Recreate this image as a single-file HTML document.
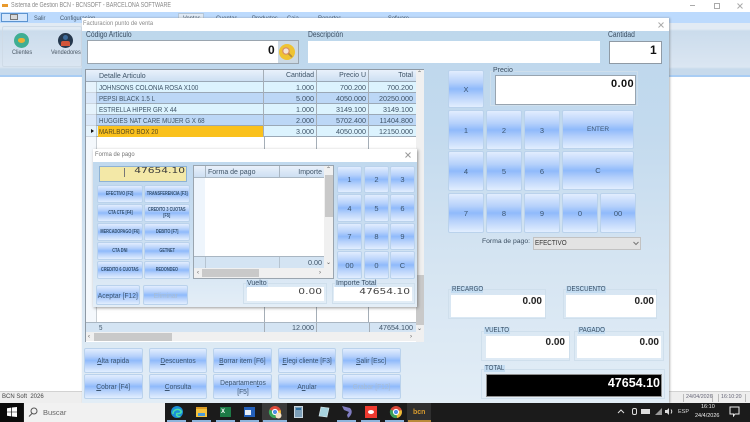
<!DOCTYPE html>
<html><head><meta charset="utf-8"><title>BCN</title>
<style>
*{box-sizing:border-box;margin:0;padding:0}
html,body{width:750px;height:422px;overflow:hidden;background:#fff}
body{font-family:"Liberation Sans",sans-serif;color:#33475a}
#p{position:absolute;left:0;top:0;width:750px;height:422px;overflow:hidden;filter:blur(.35px)}
#p div{position:absolute}
.t{white-space:nowrap;line-height:1}
.b{background:linear-gradient(#e2edfe 0%,#b6d1fb 32%,#8fbafb 50%,#b6d1fb 70%,#e2eefe 100%);border:1px solid #bad2ec;border-radius:2px;display:flex;align-items:center;justify-content:center;text-align:center;color:#3c5570;font-size:7.600px;line-height:9px;white-space:nowrap}
.b span{display:inline-block;transform:scaleX(.88)}
.bs{font-size:5.500px;line-height:6px;font-weight:bold;color:#34506e}
.b.bs span{transform:scaleX(.7)}
.n{font-size:7.500px}
.r{text-align:right;color:#222;font-weight:bold}
.l{background:#c3dcf1;color:#3a5066;font-size:7px;line-height:7px;height:7px;padding:0 0 0 1px;white-space:nowrap}
.l span{display:block;transform:scaleX(.88);transform-origin:0 0}
.ll{background:#c9def2;color:#3a5066;font-size:7px;line-height:8px;padding:0 1px;white-space:nowrap}
.g{border:1px solid #cfdfec}
.row{left:86px;width:330px;height:11px;font-size:7.200px;line-height:11px;color:#3f5468;border-bottom:1px solid #9aa8b6}
.row>.t{line-height:inherit;font-size:7.500px;transform:scaleX(.83);transform-origin:0 0}
.c{top:0;height:11px;text-align:right;white-space:nowrap;border-right:1px solid #a5aeb7;padding-right:2px}
.m{top:16px;font-size:6.500px;color:#44586c;transform:scaleX(.88);transform-origin:0 0}
.lb{font-size:8px;color:#3a4d60;top:31px;transform:scaleX(.84);transform-origin:0 0}
.d{font-family:'DejaVu Sans',sans-serif;font-size:8px;color:#444;text-align:right;transform:scaleX(1.33);transform-origin:100% 0}
.rib{font-size:6.500px;color:#4a5764;top:50px;transform:scaleX(.86);transform-origin:0 0}
</style></head><body><div id="p">

<!-- app title -->
<div style="left:0;top:0;width:750px;height:12px;background:#fff"></div>
<div style="left:2px;top:4px;width:6px;height:3px;background:#e99a2c"></div>
<div class="t" style="left:11px;top:2px;font-size:7px;color:#8a8a8a;transform:scaleX(.77);transform-origin:0 0">Sistema de Gestion BCN - BCNSOFT - BARCELONA SOFTWARE</div>
<svg style="position:absolute;left:688px;top:2px" width="58" height="8"><path d="M2 3.500H7" stroke="#aaa"/><rect x="26.500" y="1.500" width="5" height="5" fill="none" stroke="#aaa"/><path d="M49.500 1.500L54.500 6.500M54.500 1.500L49.500 6.500" stroke="#aaa"/></svg>

<!-- menu -->
<div style="left:0;top:12px;width:750px;height:11px;background:#bcdafd"></div>
<div style="left:1px;top:13px;width:27px;height:9px;background:#d4e6fb;border:1px solid #5c93cf"></div>
<div style="left:10px;top:14px;width:8px;height:6px;background:#d8d8d8;border:1px solid #777"></div>
<div class="t m" style="left:34px">Salir</div>
<div class="t m" style="left:60px">Configuracion</div>
<div style="left:178px;top:13px;width:26px;height:10px;background:#dfe9f4;border:1px solid #b4c6d8;border-bottom:0"></div>
<div class="t m" style="left:183px">Ventas</div>
<div class="t m" style="left:216px">Cuentas</div>
<div class="t m" style="left:252px">Productos</div>
<div class="t m" style="left:287px">Caja</div>
<div class="t m" style="left:318px">Reportes</div>
<div class="t m" style="left:388px">Sofware</div>

<!-- ribbon -->
<div style="left:0;top:23px;width:750px;height:54px;background:linear-gradient(#e2ebf4 0,#e2ebf4 6px,#cbdcec 8px,#dbe6f2 44px,#c7daec 46px,#c7daec 100%);border-bottom:2px solid #a9cdf4"></div>
<div style="left:2px;top:26px;width:80px;height:41px;border:1px solid #cfdbe7;border-radius:2px"></div>
<div style="left:14px;top:33px;width:15px;height:15px;border-radius:50%;background:#3fae93"></div>
<div style="left:18px;top:38px;width:7px;height:5px;border-radius:50% 50% 60% 60%;background:#ecaf34"></div>
<div class="t rib" style="left:12px">Clientes</div>
<div style="left:58px;top:33px;width:15px;height:15px;border-radius:50%;background:#25384d"></div>
<div style="left:63px;top:35px;width:5px;height:5px;border-radius:50%;background:#3c6a9a"></div>
<div style="left:61px;top:41px;width:9px;height:5px;background:#d2553a;border-radius:2px 2px 0 0"></div>
<div class="t rib" style="left:51px">Vendedores</div>

<!-- status bar -->
<div style="left:0;top:391px;width:750px;height:12px;background:#eeeeee;border-top:1px solid #d2d2d2"></div>
<div class="t" style="left:2px;top:394px;font-size:6px;color:#444">BCN Soft&nbsp; 2026</div>
<div class="t" style="left:683px;top:394px;font-size:5.300px;width:30px;color:#667;border-left:1px solid #bbb;padding-left:2px;height:8px;line-height:7px;border-right:1px solid #bbb">24/04/2026</div>
<div class="t" style="left:718px;top:394px;font-size:5.300px;width:28px;color:#667;border-left:1px solid #bbb;padding-left:2px;height:8px;line-height:7px;border-right:1px solid #bbb">16:10:20</div>

<!-- main window -->
<div style="left:82px;top:18px;width:587px;height:385px;background:linear-gradient(#bdd7ec 0,#c3daee 30%,#d6e5f2 65%,#e2edf6 100%);box-shadow:1px 0 2px rgba(90,90,90,.45)"></div>
<div style="left:82px;top:18px;width:587px;height:13px;background:#fff"></div>
<div class="t" style="left:83px;top:21px;font-size:6.500px;color:#8b8b8b;transform:scaleX(.89);transform-origin:0 0">Facturacion punto de venta</div>
<svg style="position:absolute;left:657px;top:21px" width="8" height="8"><path d="M1.500 1.500L6.500 6.500M6.500 1.500L1.500 6.500" stroke="#aaa"/></svg>

<div class="t lb" style="left:86px">Código Artículo</div>
<div style="left:87px;top:40px;width:212px;height:24px;border:1px solid #9aa5af;background:#ccd9e4"></div>
<div style="left:88px;top:41px;width:190px;height:22px;background:#fff"></div>
<div class="t" style="left:268px;top:44px;font-size:12px;color:#111;font-weight:bold">0</div>
<div style="left:279px;top:44px;width:16px;height:16px;border-radius:50%;background:#efc332"></div>
<svg style="position:absolute;left:280px;top:45px" width="14" height="14"><circle cx="6" cy="6" r="3.200" fill="#f3e5d8" stroke="#d88b6a" stroke-width="1.200"/><path d="M8.500 8.500L12 12" stroke="#b48a3c" stroke-width="1.800"/></svg>
<div class="t lb" style="left:308px">Descripción</div>
<div style="left:308px;top:41px;width:292px;height:22px;background:#fff"></div>
<div class="t lb" style="left:608px">Cantidad</div>
<div style="left:609px;top:41px;width:53px;height:23px;background:#fff;border:1px solid #8f9aa5"></div>
<div class="t" style="left:650px;top:44px;font-size:12px;color:#111;font-weight:bold">1</div>

<!-- main grid -->
<div style="left:85px;top:69px;width:339px;height:273px;background:#fff;border:1px solid #8e99a4;border-bottom:0"></div>
<div style="left:86px;top:70px;width:330px;height:12px;background:linear-gradient(#e9f1fb,#cddff2);border-bottom:1px solid #9aa8b6;font-size:7px;color:#3f5468">
 <div class="t" style="left:13px;top:3px">Detalle Articulo</div>
 <div class="c" style="left:0;width:178px;height:12px"></div>
 <div class="c" style="left:178px;width:53px;height:12px;line-height:12px">Cantidad</div>
 <div class="c" style="left:231px;width:52px;height:12px;line-height:12px">Precio U</div>
 <div class="c" style="left:283px;width:46px;height:12px;line-height:12px;border:0">Total</div>
</div>
<div style="left:416px;top:70px;width:8px;height:272px;background:#f0f0f0"></div>
<div class="t" style="left:417px;top:71px;font-size:6px;color:#555">⌃</div>
<div style="left:416px;top:275px;width:8px;height:50px;background:#c9c9c9"></div>
<div class="t" style="left:417px;top:326px;font-size:6px;color:#555">⌄</div>

<div class="row" style="top:82px;background:#dcf3fe"><div class="t" style="left:13px;top:0">JOHNSONS COLONIA ROSA X100</div><div class="c" style="left:0;width:178px"></div><div class="c" style="left:178px;width:53px">1.000</div><div class="c" style="left:231px;width:52px">700.200</div><div class="c" style="left:283px;width:46px;border:0">700.200</div></div>
<div class="row" style="top:93px;background:#bcd7f6"><div class="t" style="left:13px;top:0">PEPSI BLACK 1.5 L</div><div class="c" style="left:0;width:178px"></div><div class="c" style="left:178px;width:53px">5.000</div><div class="c" style="left:231px;width:52px">4050.000</div><div class="c" style="left:283px;width:46px;border:0">20250.000</div></div>
<div class="row" style="top:104px;background:#dcf3fe"><div class="t" style="left:13px;top:0">ESTRELLA HIPER GR X 44</div><div class="c" style="left:0;width:178px"></div><div class="c" style="left:178px;width:53px">1.000</div><div class="c" style="left:231px;width:52px">3149.100</div><div class="c" style="left:283px;width:46px;border:0">3149.100</div></div>
<div class="row" style="top:115px;background:#bcd7f6"><div class="t" style="left:13px;top:0">HUGGIES NAT CARE MUJER G X 68</div><div class="c" style="left:0;width:178px"></div><div class="c" style="left:178px;width:53px">2.000</div><div class="c" style="left:231px;width:52px">5702.400</div><div class="c" style="left:283px;width:46px;border:0">11404.800</div></div>
<div class="row" style="top:126px;background:#dcf3fe"><div style="left:12px;top:0;width:166px;height:11px;background:#fac11d"></div><div class="t" style="left:13px;top:0;color:#5a4a1c">MARLBORO BOX 20</div><div class="c" style="left:0;width:178px"></div><div class="c" style="left:178px;width:53px">3.000</div><div class="c" style="left:231px;width:52px">4050.000</div><div class="c" style="left:283px;width:46px;border:0">12150.000</div></div>
<div style="left:86px;top:82px;width:11px;height:240px;background:#eef4fb;border-right:1px solid #a5aeb7;opacity:.6"></div>
<div style="left:91px;top:129px;width:0;height:0;border-left:3px solid #111;border-top:2.500px solid transparent;border-bottom:2.500px solid transparent"></div>
<div style="left:264px;top:137px;width:1px;height:185px;background:#a5aeb7"></div>
<div style="left:316px;top:137px;width:1px;height:185px;background:#a5aeb7"></div>
<div style="left:368px;top:137px;width:1px;height:185px;background:#a5aeb7"></div>
<div class="row" style="top:322px;height:10px;line-height:10px;background:#d4e4f3;border:0;border-top:1px solid #a9b6c2"><div class="t" style="left:13px;top:0">5</div><div class="c" style="left:178px;width:53px;height:10px;border-left:1px solid #a5aeb7">12.000</div><div class="c" style="left:283px;width:46px;height:10px;border:0;border-left:1px solid #a5aeb7">47654.100</div></div>
<div style="left:86px;top:332px;width:338px;height:9px;background:#f0f0f0"></div>
<div style="left:94px;top:333px;width:78px;height:8px;background:#c9c9c9"></div>
<div class="t" style="left:88px;top:334px;font-size:6px;color:#555">‹</div>
<div class="t" style="left:410px;top:334px;font-size:6px;color:#555">›</div>

<!-- bottom buttons -->
<div class="b" style="left:84px;top:348px;width:59px;height:25px"><span><u>A</u>lta rapida</span></div>
<div class="b" style="left:149px;top:348px;width:58px;height:25px"><span><u>D</u>escuentos</span></div>
<div class="b" style="left:213px;top:348px;width:59px;height:25px"><span><u>B</u>orrar item [F6]</span></div>
<div class="b" style="left:278px;top:348px;width:58px;height:25px"><span><u>E</u>legi cliente [F3]</span></div>
<div class="b" style="left:342px;top:348px;width:59px;height:25px"><span><u>S</u>alir [Esc]</span></div>
<div class="b" style="left:84px;top:374px;width:59px;height:25px"><span><u>C</u>obrar [F4]</span></div>
<div class="b" style="left:149px;top:374px;width:58px;height:25px"><span><u>C</u>onsulta</span></div>
<div class="b" style="left:213px;top:374px;width:59px;height:25px"><span>Departamen<u>t</u>os<br>[F5]</span></div>
<div class="b" style="left:278px;top:374px;width:58px;height:25px"><span>A<u>n</u>ular</span></div>
<div class="b" style="left:342px;top:374px;width:59px;height:25px;color:#a9bdd3"><span>Grabar [F12]</span></div>

<!-- right keypad -->
<div class="b n" style="left:448px;top:70px;width:36px;height:38px">X</div>
<div class="g" style="left:490px;top:71px;width:148px;height:35px"></div>
<div class="t" style="left:493px;top:67px;font-size:7px;color:#3a4d60;background:#c3daee;padding-right:1px">Precio</div>
<div style="left:495px;top:75px;width:141px;height:30px;background:#fff;border:1px solid #98a4af"></div>
<div class="t" style="left:600px;top:79px;width:34px;text-align:right;font-size:11px;font-weight:bold;color:#111;letter-spacing:.4px">0.00</div>
<div class="b n" style="left:448px;top:110px;width:36px;height:40px">1</div>
<div class="b n" style="left:486px;top:110px;width:36px;height:40px">2</div>
<div class="b n" style="left:524px;top:110px;width:36px;height:40px">3</div>
<div class="b" style="left:562px;top:110px;width:72px;height:39px;font-size:6.500px">ENTER</div>
<div class="b n" style="left:448px;top:151px;width:36px;height:40px">4</div>
<div class="b n" style="left:486px;top:151px;width:36px;height:40px">5</div>
<div class="b n" style="left:524px;top:151px;width:36px;height:40px">6</div>
<div class="b n" style="left:562px;top:151px;width:72px;height:39px">C</div>
<div class="b n" style="left:448px;top:193px;width:36px;height:40px">7</div>
<div class="b n" style="left:486px;top:193px;width:36px;height:40px">8</div>
<div class="b n" style="left:524px;top:193px;width:36px;height:40px">9</div>
<div class="b n" style="left:562px;top:193px;width:36px;height:40px">0</div>
<div class="b n" style="left:600px;top:193px;width:36px;height:40px">00</div>
<div class="t" style="left:482px;top:239px;font-size:6.800px;color:#3a4d60">Forma de pago:</div>
<div style="left:533px;top:237px;width:108px;height:13px;background:#e3e3e3;border:1px solid #c2c2c2"></div>
<div class="t" style="left:535px;top:239px;font-size:7.200px;color:#333;transform:scaleX(.88);transform-origin:0 0">EFECTIVO</div>
<svg style="position:absolute;left:633px;top:241px" width="6" height="5"><path d="M.5 1L3 3.500L5.500 1" fill="none" stroke="#777"/></svg>

<!-- totals -->
<div class="g" style="left:448px;top:289px;width:98px;height:30px"></div>
<div class="l" style="left:451px;top:286px;width:32px"><span>RECARGO</span></div>
<div style="left:451px;top:295px;width:94px;height:22px;background:#fff"></div>
<div class="t r" style="left:500px;top:297px;width:42px;font-size:10px">0.00</div>
<div class="g" style="left:563px;top:289px;width:94px;height:30px"></div>
<div class="l" style="left:566px;top:286px;width:40px"><span>DESCUENTO</span></div>
<div style="left:566px;top:295px;width:90px;height:22px;background:#fff"></div>
<div class="t r" style="left:612px;top:297px;width:42px;font-size:10px">0.00</div>
<div class="g" style="left:481px;top:331px;width:89px;height:30px"></div>
<div class="l" style="left:484px;top:327px;width:26px"><span>VUELTO</span></div>
<div style="left:486px;top:336px;width:83px;height:22px;background:#fff"></div>
<div class="t r" style="left:523px;top:338px;width:42px;font-size:10px">0.00</div>
<div class="g" style="left:574px;top:331px;width:90px;height:30px"></div>
<div class="l" style="left:578px;top:327px;width:27px"><span>PAGADO</span></div>
<div style="left:577px;top:336px;width:84px;height:22px;background:#fff"></div>
<div class="t r" style="left:617px;top:338px;width:42px;font-size:10px">0.00</div>
<div class="g" style="left:481px;top:369px;width:184px;height:30px"></div>
<div class="l" style="left:484px;top:365px;width:21px"><span>TOTAL</span></div>
<div style="left:486px;top:374px;width:176px;height:23px;background:#000;border:1px solid #8f8f8f"></div>
<div class="t" style="left:590px;top:377px;width:70px;text-align:right;font-size:12.500px;font-weight:bold;color:#fff">47654.10</div>

<!-- payment dialog -->
<div style="left:93px;top:149px;width:324px;height:158px;background:linear-gradient(#bfd8ee 0,#c8ddf0 50%,#e4eef7 100%);box-shadow:1px 1px 3px rgba(70,70,70,.55)"></div>
<div style="left:93px;top:149px;width:324px;height:13px;background:#fff"></div>
<div class="t" style="left:95px;top:152px;font-size:6.500px;color:#777;transform:scaleX(.9);transform-origin:0 0">Forma de pago</div>
<svg style="position:absolute;left:404px;top:151px" width="8" height="8"><path d="M1.500 1.500L6.500 6.500M6.500 1.500L1.500 6.500" stroke="#999"/></svg>
<div style="left:99px;top:166px;width:88px;height:16px;background:#f3e8a7;border:1px solid #8eb2d4"></div>
<div style="left:124px;top:168px;width:1px;height:9px;background:#777"></div>
<div class="t d" style="left:128px;top:167px;width:57px;color:#3b3b3b">47654.10</div>

<div class="b bs" style="left:97px;top:185px;width:46px;height:18px"><span>EFECTIVO [F2]</span></div>
<div class="b bs" style="left:144px;top:185px;width:46px;height:18px"><span>TRANSFERENCIA [F3]</span></div>
<div class="b bs" style="left:97px;top:204px;width:46px;height:18px"><span>CTA CTE [F4]</span></div>
<div class="b bs" style="left:144px;top:204px;width:46px;height:18px"><span>CREDITO 3 CUOTAS<br>[F5]</span></div>
<div class="b bs" style="left:97px;top:223px;width:46px;height:18px"><span>MERCADOPAGO [F6]</span></div>
<div class="b bs" style="left:144px;top:223px;width:46px;height:18px"><span>DEBITO [F7]</span></div>
<div class="b bs" style="left:97px;top:242px;width:46px;height:18px"><span>CTA DNI</span></div>
<div class="b bs" style="left:144px;top:242px;width:46px;height:18px"><span>GETNET</span></div>
<div class="b bs" style="left:97px;top:261px;width:46px;height:18px"><span>CREDITO 6 CUOTAS</span></div>
<div class="b bs" style="left:144px;top:261px;width:46px;height:18px"><span>REDONDEO</span></div>

<div style="left:193px;top:165px;width:141px;height:114px;background:#f0f0f0;border:1px solid #9aa5af"></div>
<div style="left:194px;top:166px;width:130px;height:12px;background:linear-gradient(#e9f1fb,#cddff2);border-bottom:1px solid #a9b6c2"></div>
<div style="left:205px;top:166px;width:1px;height:12px;background:#a9b6c2"></div>
<div style="left:279px;top:166px;width:1px;height:12px;background:#a9b6c2"></div>
<div class="t" style="left:208px;top:169px;font-size:7px;color:#3f5468">Forma de pago</div>
<div class="t" style="left:280px;top:169px;width:42px;text-align:right;font-size:7px;color:#3f5468">Importe</div>
<div style="left:194px;top:178px;width:11px;height:79px;background:#eef5fc"></div>
<div style="left:205px;top:178px;width:119px;height:79px;background:#fff"></div>
<div style="left:194px;top:256px;width:130px;height:12px;background:#d4e4f3;border-top:1px solid #a9b6c2"></div>
<div style="left:205px;top:257px;width:1px;height:11px;background:#b6c4d1"></div>
<div style="left:279px;top:257px;width:1px;height:11px;background:#b6c4d1"></div>
<div class="t" style="left:280px;top:259px;width:42px;text-align:right;font-size:7.200px;color:#3f5468">0.00</div>
<div style="left:325px;top:175px;width:8px;height:42px;background:#c9c9c9"></div>
<div class="t" style="left:326px;top:167px;font-size:6px;color:#555">⌃</div>
<div class="t" style="left:326px;top:260px;font-size:6px;color:#555">⌄</div>
<div style="left:202px;top:269px;width:57px;height:8px;background:#c9c9c9"></div>
<div class="t" style="left:197px;top:270px;font-size:6px;color:#555">‹</div>
<div class="t" style="left:319px;top:270px;font-size:6px;color:#555">›</div>

<div class="b n" style="left:337px;top:166px;width:25px;height:27px">1</div>
<div class="b n" style="left:364px;top:166px;width:25px;height:27px">2</div>
<div class="b n" style="left:390px;top:166px;width:25px;height:27px">3</div>
<div class="b n" style="left:337px;top:194px;width:25px;height:28px">4</div>
<div class="b n" style="left:364px;top:194px;width:25px;height:28px">5</div>
<div class="b n" style="left:390px;top:194px;width:25px;height:28px">6</div>
<div class="b n" style="left:337px;top:223px;width:25px;height:27px">7</div>
<div class="b n" style="left:364px;top:223px;width:25px;height:27px">8</div>
<div class="b n" style="left:390px;top:223px;width:25px;height:27px">9</div>
<div class="b n" style="left:337px;top:251px;width:25px;height:28px">00</div>
<div class="b n" style="left:364px;top:251px;width:25px;height:28px">0</div>
<div class="b n" style="left:390px;top:251px;width:25px;height:28px">C</div>

<div class="b" style="left:96px;top:285px;width:44px;height:20px"><span>Aceptar [F12]</span></div>
<div class="b" style="left:143px;top:285px;width:45px;height:20px;color:#a9bdd3"><span>Eliminar</span></div>
<div class="g" style="left:243px;top:283px;width:84px;height:21px"></div>
<div class="ll" style="left:246px;top:280px">Vuelto</div>
<div style="left:247px;top:287px;width:77px;height:14px;background:#fff"></div>
<div class="t d" style="left:262px;top:288px;width:60px">0.00</div>
<div class="g" style="left:332px;top:283px;width:83px;height:21px"></div>
<div class="ll" style="left:335px;top:280px">Importe Total</div>
<div style="left:334px;top:287px;width:78px;height:14px;background:#fff"></div>
<div class="t d" style="left:345px;top:288px;width:65px">47654.10</div>

<!-- taskbar -->
<div style="left:0;top:403px;width:750px;height:19px;background:#1b1b1b"></div>
<div style="left:0;top:403px;width:23px;height:19px;background:#0b0b0b"></div>
<svg style="position:absolute;left:7px;top:407px" width="10" height="10"><path d="M0 1.200L4.300.6V4.700H0ZM5 .5L10 0V4.700H5ZM0 5.300H4.300V9.400L0 8.800ZM5 5.300H10V10L5 9.500Z" fill="#fff"/></svg>
<div style="left:24px;top:403px;width:141px;height:19px;background:#f1f1f1"></div>
<svg style="position:absolute;left:28px;top:407px" width="10" height="10"><circle cx="6" cy="4" r="3" fill="none" stroke="#555"/><path d="M4 6.500L1 9.500" stroke="#555"/></svg>
<div class="t" style="left:43px;top:409px;font-size:7.500px;color:#666">Buscar</div>

<div style="left:262px;top:403px;width:25px;height:19px;background:#3a3a3a"></div>
<div style="left:407px;top:403px;width:24px;height:19px;background:#2f2f2f"></div>
<div style="left:167px;top:420px;width:19px;height:2px;background:#8db4dc"></div>
<div style="left:192px;top:420px;width:19px;height:2px;background:#8db4dc"></div>
<div style="left:216px;top:420px;width:19px;height:2px;background:#8db4dc"></div>
<div style="left:240px;top:420px;width:19px;height:2px;background:#8db4dc"></div>
<div style="left:263px;top:420px;width:24px;height:2px;background:#8db4dc"></div>
<div style="left:337px;top:420px;width:19px;height:2px;background:#8db4dc"></div>
<div style="left:361px;top:420px;width:19px;height:2px;background:#8db4dc"></div>
<div style="left:385px;top:420px;width:19px;height:2px;background:#8db4dc"></div>
<div style="left:408px;top:420px;width:23px;height:2px;background:#b98a3a"></div>

<svg style="position:absolute;left:170px;top:405px" width="14" height="14"><circle cx="7" cy="7" r="6" fill="#1b8fd8"/><path d="M3 9a4.500 4 0 0 1 8-3c1 2-2 3-4 2.500-1.500 2 1 3.500 3.500 3" fill="none" stroke="#4be0a8" stroke-width="1.500"/></svg>
<div style="left:196px;top:407px;width:11px;height:10px;background:#f3c23e;border-top:2px solid #d99a24"></div>
<div style="left:198px;top:413px;width:7px;height:3px;background:#4a9ad8"></div>
<div style="left:220px;top:407px;width:11px;height:10px;background:#1d7a46"></div>
<div class="t" style="left:221px;top:409px;font-size:6px;font-weight:bold;color:#fff">X</div>
<div style="left:244px;top:407px;width:11px;height:10px;background:#2360ba"></div>
<div style="left:245px;top:410px;width:6px;height:5px;background:#e6effa"></div>
<svg style="position:absolute;left:268px;top:405px" width="14" height="14"><circle cx="7" cy="7" r="6" fill="#dd4a3a"/><path d="M7 7L12.500 5A6 6 0 0 1 8 13Z" fill="#f2c233"/><path d="M7 7L8 13A6 6 0 0 1 1.500 4.500Z" fill="#39a65a"/><circle cx="7" cy="7" r="2.600" fill="#4f8fe6" stroke="#fff"/><circle cx="10.500" cy="10.500" r="3" fill="#f5e3c8"/></svg>
<div style="left:294px;top:406px;width:9px;height:12px;background:#7d9fb8;border:1px solid #c8d6e0"></div>
<div style="left:296px;top:408px;width:5px;height:2px;background:#2e6e9e"></div>
<svg style="position:absolute;left:317px;top:405px" width="14" height="14"><path d="M4 2L12 3L10 12L2 11Z" fill="#a7d3df" stroke="#dcebef" stroke-width=".6"/></svg>
<svg style="position:absolute;left:341px;top:405px" width="12" height="14"><path d="M1 1L9 3C12 6 11 10 7 13L6 10L8 7L3 5Z" fill="#7f7cc0"/></svg>
<div style="left:365px;top:406px;width:12px;height:12px;background:#ee3a30"></div>
<div style="left:368px;top:410px;width:6px;height:4px;border-radius:50%;background:#fff"></div>
<svg style="position:absolute;left:389px;top:405px" width="14" height="14"><circle cx="7" cy="7" r="6" fill="#d6483a"/><path d="M7 7L12.500 5A6 6 0 0 1 8 13Z" fill="#e9bf36"/><path d="M7 7L8 13A6 6 0 0 1 1.500 4.500Z" fill="#3b9f58"/><circle cx="7" cy="7" r="2.600" fill="#4f8fe6" stroke="#fff"/></svg>
<div class="t" style="left:413px;top:409px;font-size:7px;font-weight:bold;color:#d69a2e">bcn</div>

<svg style="position:absolute;left:617px;top:408px" width="8" height="8"><path d="M1 5L4 2L7 5" fill="none" stroke="#ddd"/></svg>
<div style="left:632px;top:408px;width:5px;height:7px;border:1px solid #ddd;border-radius:2px"></div>
<div style="left:641px;top:409px;width:9px;height:5px;background:#ddd"></div>
<svg style="position:absolute;left:654px;top:407px" width="9" height="9"><path d="M1 8L8 1V8Z" fill="#999"/></svg>
<svg style="position:absolute;left:664px;top:407px" width="10" height="9"><path d="M1 3H3L5 1V8L3 6H1Z" fill="#ddd"/><path d="M7 2.500Q8.500 4.500 7 6.500" fill="none" stroke="#ddd"/></svg>
<div class="t" style="left:678px;top:410px;font-size:5.500px;color:#ddd">ESP</div>
<div class="t" style="left:701px;top:405px;font-size:5.500px;color:#eee">16:10</div>
<div class="t" style="left:695px;top:414px;font-size:5.500px;color:#eee">24/4/2026</div>
<svg style="position:absolute;left:729px;top:406px" width="11" height="11"><path d="M1 1H10V8H6L4.500 10V8H1Z" fill="none" stroke="#eee"/></svg>

</div></body></html>
